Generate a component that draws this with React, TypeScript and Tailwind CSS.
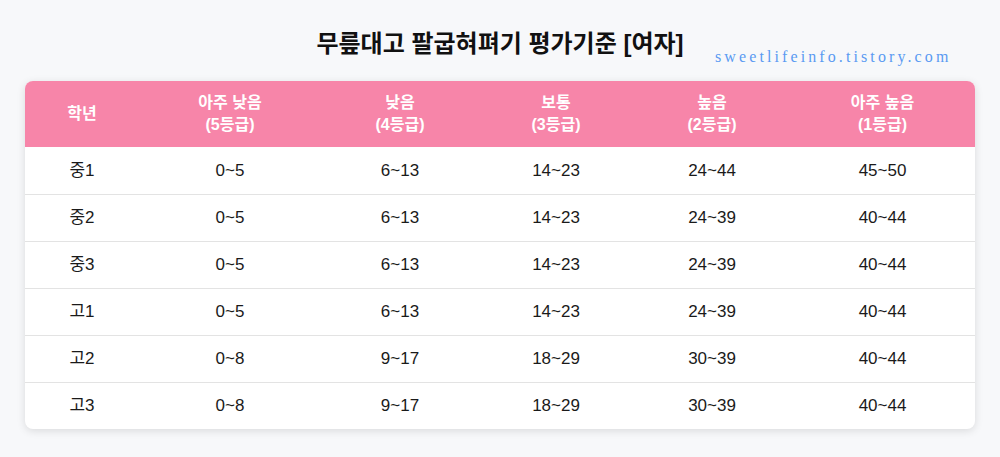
const headers = [
  ['학년'],
  ['아주 낮음', '(5등급)'],
  ['낮음', '(4등급)'],
  ['보통', '(3등급)'],
  ['높음', '(2등급)'],
  ['아주 높음', '(1등급)'],
];

const rows = [
  ['중1', '0~5', '6~13', '14~23', '24~44', '45~50'],
  ['중2', '0~5', '6~13', '14~23', '24~39', '40~44'],
  ['중3', '0~5', '6~13', '14~23', '24~39', '40~44'],
  ['고1', '0~5', '6~13', '14~23', '24~39', '40~44'],
  ['고2', '0~8', '9~17', '18~29', '30~39', '40~44'],
  ['고3', '0~8', '9~17', '18~29', '30~39', '40~44'],
];

const widths = ['w-[114px]', 'w-[182px]', 'w-[158px]', 'w-[154px]', 'w-[158px]', 'w-[183px]'];

const App = () => (
  <div className="relative min-h-[457px] bg-[#f7f8fa] px-[25px] pt-[27px] font-['Liberation_Sans','Noto_Sans_CJK_KR',sans-serif] text-[#1a1a1a]">
    <h1 className="text-center text-[24px] font-bold leading-[34px] text-[#111]">무릎대고 팔굽혀펴기 평가기준 [여자]</h1>
    <span className="absolute left-[715px] top-[45px] font-['Liberation_Serif',serif] text-[16px] tracking-[3.1px] text-[#5a9af2]">
      sweetlifeinfo.tistory.com
    </span>
    <div className="mt-[20px] overflow-hidden rounded-[8px] bg-white shadow-[0_2px_8px_rgba(0,0,0,0.12)]">
      <div className="flex h-[66px] items-center bg-[#f785a9] text-[16px] font-bold leading-[22px] text-white">
        {headers.map((h, i) => (
          <div key={i} className={`${widths[i]} flex flex-col items-center text-center`}>
            {h.map((l) => (
              <span key={l}>{l}</span>
            ))}
          </div>
        ))}
      </div>
      {rows.map((r, ri) => (
        <div
          key={ri}
          className={`flex h-[47px] items-center text-[17px] ${ri > 0 ? 'border-t border-[#e3e3e3]' : ''}`}
        >
          {r.map((c, ci) => (
            <div key={ci} className={`${widths[ci]} text-center`}>
              {c}
            </div>
          ))}
        </div>
      ))}
    </div>
  </div>
);

export default App;
